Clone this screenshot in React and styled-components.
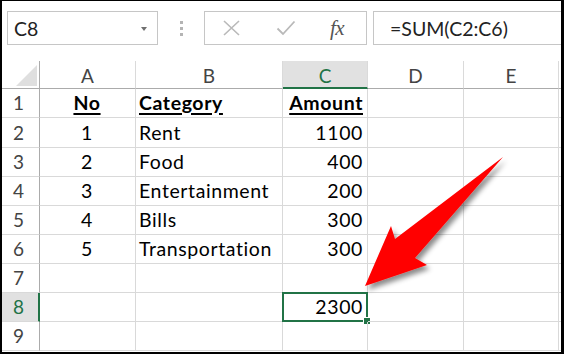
import React from 'react';
import styled, { createGlobalStyle } from 'styled-components';

const GlobalStyle = createGlobalStyle`
  html, body {
    margin: 0;
    padding: 0;
    background: #fff;
  }
`;

const Frame = styled.div`
  position: relative;
  width: 564px;
  height: 354px;
  box-sizing: border-box;
  border-style: solid;
  border-color: #000;
  border-width: 1px 3px 2px 2px;
  overflow: hidden;
  background: #fff;
  font-family: Lato, 'Liberation Sans', sans-serif;
`;

const Toolbar = styled.div`
  display: flex;
  align-items: flex-start;
  height: 60px;
  box-sizing: border-box;
  padding: 10px 0 0 5px;
`;

const NameBox = styled.div`
  position: relative;
  width: 151px;
  height: 34px;
  box-sizing: border-box;
  border: 1px solid #c6c6c6;
  display: flex;
  align-items: center;
  padding-left: 6px;
  font-size: 19.5px;
  color: #222;
`;

const Caret = styled.span`
  position: absolute;
  right: 10px;
  top: 15px;
  width: 0;
  height: 0;
  border-left: 3px solid transparent;
  border-right: 3px solid transparent;
  border-top: 4px solid #707070;
`;

const Grip = styled.div`
  width: 46px;
  height: 34px;
  display: flex;
  flex-direction: column;
  align-items: center;
  justify-content: center;
  gap: 3px;
`;

const Dot = styled.span`
  width: 3px;
  height: 3px;
  background: #b4b4b4;
`;

const ButtonBox = styled.div`
  width: 163px;
  height: 34px;
  box-sizing: border-box;
  border: 1px solid #c6c6c6;
  display: flex;
  align-items: center;
  padding-left: 17px;
`;

const IconSlot = styled.span`
  display: flex;
  align-items: center;
  justify-content: center;
  width: ${p => p.$w}px;
  margin-right: ${p => p.$gap || 0}px;
`;

const Fx = styled.span`
  font-family: 'Liberation Serif', 'DejaVu Serif', serif;
  font-style: italic;
  font-size: 21px;
  color: #555;
  letter-spacing: -0.5px;
`;

const FormulaBox = styled.div`
  flex: 1;
  margin-left: 6px;
  height: 34px;
  box-sizing: border-box;
  border: 1px solid #c6c6c6;
  border-right: none;
  display: flex;
  align-items: center;
  padding-left: 16px;
  font-size: 19.5px;
  color: #222;
`;

const Sheet = styled.div`
  display: grid;
  grid-template-columns: 38px 96px 147px 85px 96px 95px 1fr;
  grid-template-rows: 28px 29px 30px 29px 29px 29px 29px 29px 29px 29px;
`;

const Cell = styled.div`
  box-sizing: border-box;
  border-right: 1px solid #d9d9d9;
  border-bottom: 1px solid #d9d9d9;
  display: flex;
  align-items: flex-end;
  padding: 0 4px 5px 3px;
  font-size: 19.5px;
  letter-spacing: 0.6px;
  line-height: 1;
  color: #000;
  white-space: nowrap;
  justify-content: ${p =>
    p.$align === 'center' ? 'center' : p.$align === 'right' ? 'flex-end' : 'flex-start'};
  font-weight: ${p => (p.$bold ? 700 : 400)};
  text-decoration: ${p => (p.$bold ? 'underline' : 'none')};
  text-underline-offset: 3px;
  text-decoration-thickness: 2px;
  position: relative;
`;

const LastCell = styled(Cell)`
  border-right: none;
`;

const ColHead = styled.div`
  box-sizing: border-box;
  border-right: 1px solid #dadada;
  border-bottom: ${p => (p.$active ? '2px solid #217346' : '1px solid #ababab')};
  background: ${p => (p.$active ? '#e1e1e1' : '#fff')};
  color: ${p => (p.$active ? '#217346' : '#444')};
  display: flex;
  align-items: center;
  justify-content: center;
  font-size: 19px;
  padding-top: 2px;
`;

const Corner = styled.div`
  box-sizing: border-box;
  border-right: 1px solid #ababab;
  border-bottom: 1px solid #ababab;
  position: relative;
`;

const CornerTriangle = styled.span`
  position: absolute;
  right: 2px;
  bottom: 2px;
  width: 0;
  height: 0;
  border-left: 21px solid transparent;
  border-bottom: 21px solid #dfdfdf;
`;

const RowHead = styled.div`
  box-sizing: border-box;
  border-right: ${p => (p.$active ? '2px solid #217346' : '1px solid #ababab')};
  border-bottom: 1px solid #d9d9d9;
  background: ${p => (p.$active ? '#e1e1e1' : '#fff')};
  color: ${p => (p.$active ? '#217346' : '#444')};
  display: flex;
  align-items: flex-end;
  justify-content: center;
  padding: 0 ${p => (p.$active ? 3 : 4)}px 5px 0;
  font-size: 19px;
  line-height: 1;
`;

const Selection = styled.span`
  position: absolute;
  left: -1px;
  top: -1px;
  right: -1px;
  bottom: -1px;
  border: 2px solid #217346;
  pointer-events: none;
`;

const FillHandle = styled.span`
  position: absolute;
  right: -5px;
  bottom: -5px;
  width: 6px;
  height: 6px;
  background: #217346;
  border: 1px solid #fff;
`;

const ArrowLayer = styled.svg`
  position: absolute;
  left: -2px;
  top: -1px;
  width: 564px;
  height: 354px;
  pointer-events: none;
`;

const columns = ['A', 'B', 'C', 'D', 'E'];

const rows = [
  { n: 1, a: 'No', b: 'Category', c: 'Amount', head: true },
  { n: 2, a: '1', b: 'Rent', c: '1100' },
  { n: 3, a: '2', b: 'Food', c: '400' },
  { n: 4, a: '3', b: 'Entertainment', c: '200' },
  { n: 5, a: '4', b: 'Bills', c: '300' },
  { n: 6, a: '5', b: 'Transportation', c: '300' },
  { n: 7 },
  { n: 8, c: '2300', selected: true },
  { n: 9 }
];

function Row({ r }) {
  return (
    <React.Fragment>
      <RowHead $active={r.selected}>{r.n}</RowHead>
      <Cell $align="center" $bold={r.head}>{r.a}</Cell>
      <Cell $bold={r.head}>{r.b}</Cell>
      <Cell $align="right" $bold={r.head}>
        {r.c}
        {r.selected && (
          <Selection>
            <FillHandle />
          </Selection>
        )}
      </Cell>
      <Cell />
      <Cell />
      <LastCell />
    </React.Fragment>
  );
}

export default function App() {
  return (
    <Frame>
      <GlobalStyle />
      <Toolbar>
        <NameBox>
          C8
          <Caret />
        </NameBox>
        <Grip>
          <Dot />
          <Dot />
          <Dot />
        </Grip>
        <ButtonBox>
          <IconSlot $w={19} $gap={35}>
            <svg width="19" height="16" viewBox="0 0 19 16">
              <path d="M2 1 L17 15 M17 1 L2 15" stroke="#b9b9b9" strokeWidth="1.6" fill="none" />
            </svg>
          </IconSlot>
          <IconSlot $w={20} $gap={34}>
            <svg width="20" height="16" viewBox="0 0 20 16">
              <path d="M1.5 8.5 L7 14 L18.5 1.5" stroke="#b9b9b9" strokeWidth="1.8" fill="none" />
            </svg>
          </IconSlot>
          <Fx>fx</Fx>
        </ButtonBox>
        <FormulaBox>=SUM(C2:C6)</FormulaBox>
      </Toolbar>
      <Sheet>
        <Corner>
          <CornerTriangle />
        </Corner>
        {columns.map(c => (
          <ColHead key={c} $active={c === 'C'}>{c}</ColHead>
        ))}
        <ColHead style={{ borderRight: 'none' }} />
        {rows.map(r => (
          <Row key={r.n} r={r} />
        ))}
      </Sheet>
      <ArrowLayer viewBox="0 0 564 354">
        <defs>
          <filter id="shadow" x="-20%" y="-20%" width="150%" height="150%">
            <feDropShadow dx="3" dy="4" stdDeviation="2.5" floodColor="#000" floodOpacity="0.45" />
          </filter>
        </defs>
        <path
          d="M365 286 L391 226 L395 239 L503 157 L415 258 L427 265 Z"
          fill="#ff0000"
          filter="url(#shadow)"
        />
      </ArrowLayer>
    </Frame>
  );
}
